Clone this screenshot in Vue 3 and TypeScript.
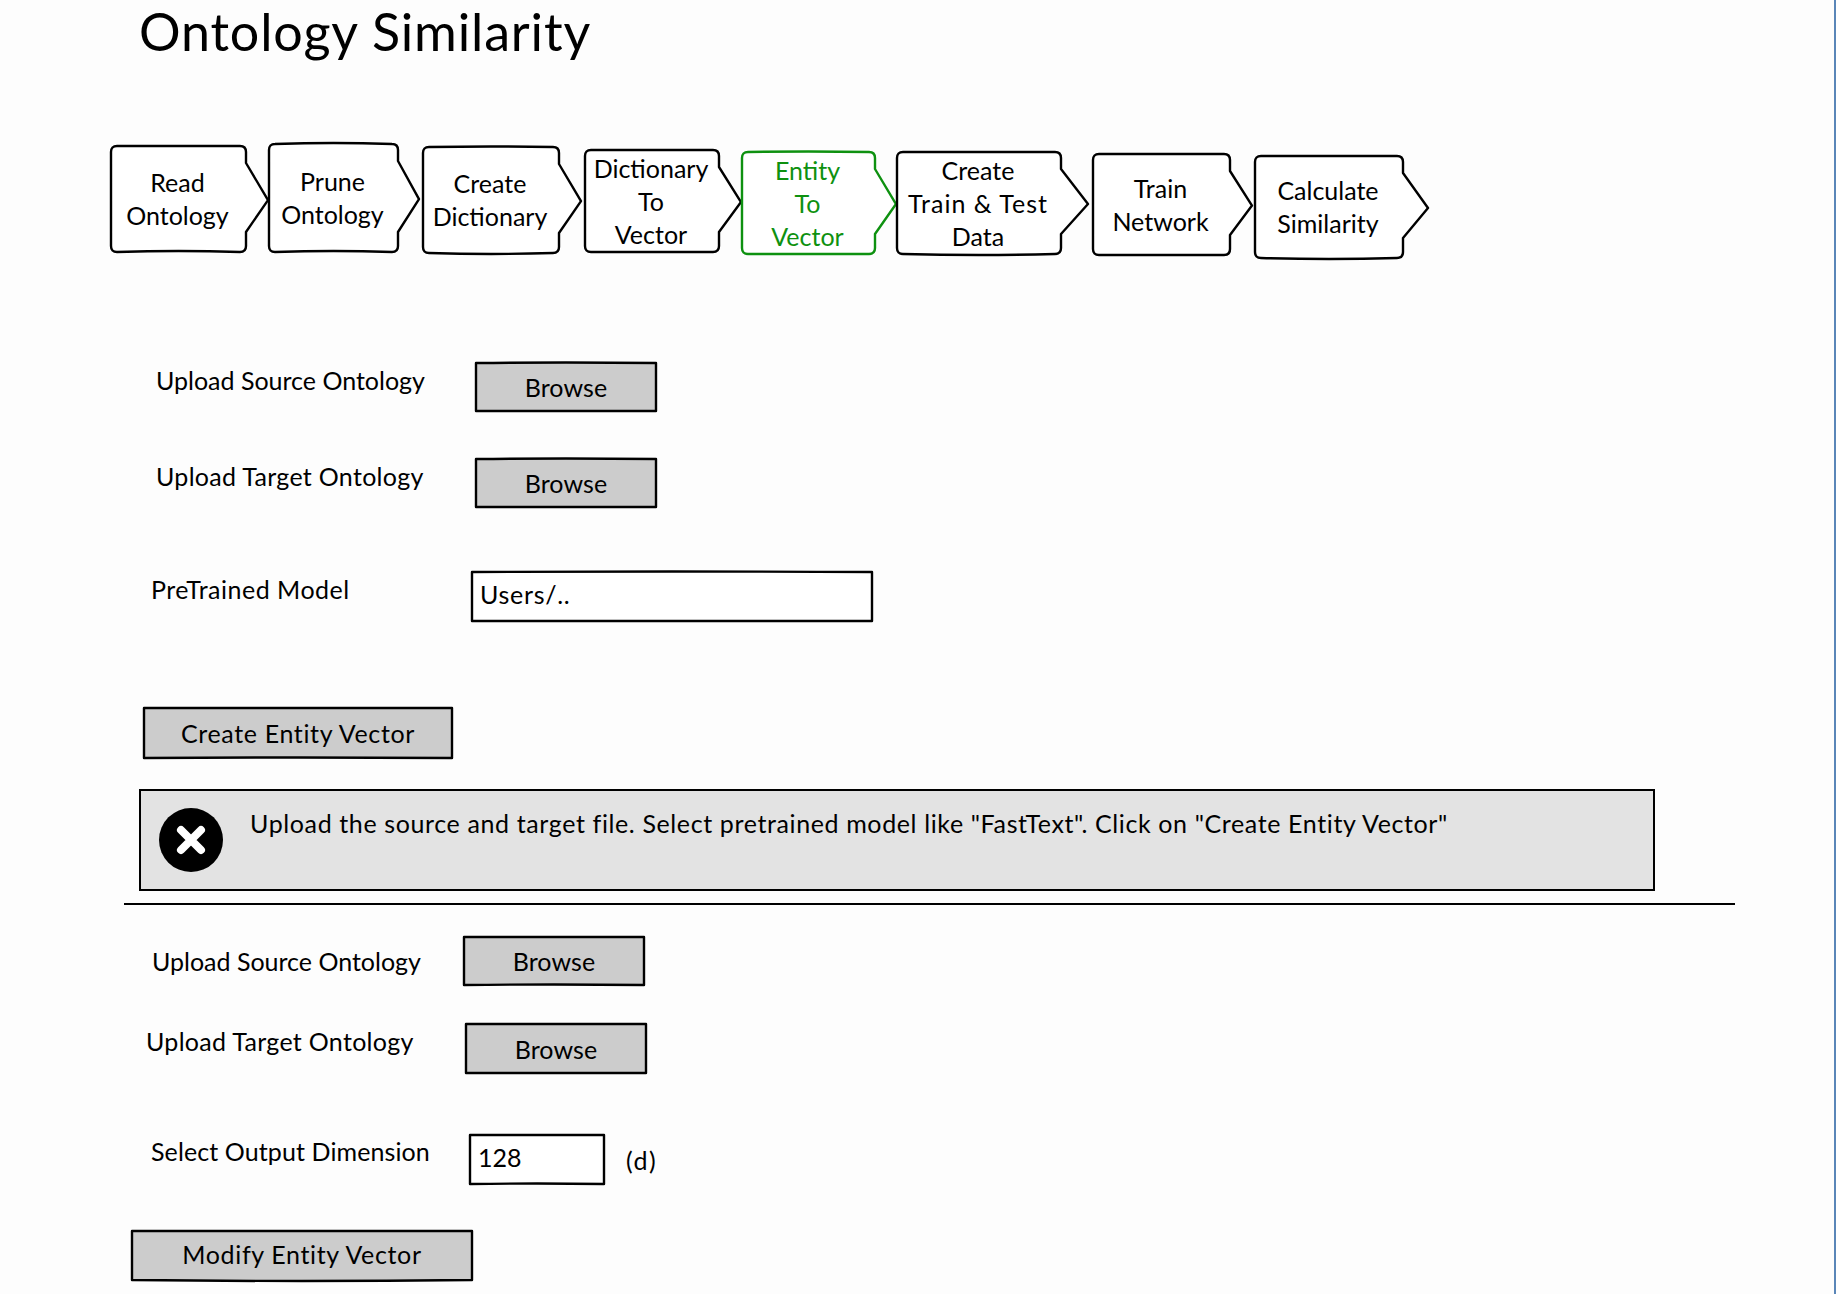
<script setup lang="ts">
import { defineComponent, h } from 'vue'

// sketchy outline used behind steps, buttons and inputs
const SketchBox = defineComponent({
  props: {
    w: { type: Number, required: true },
    h: { type: Number, required: true },
    tip: { type: Number, default: 0 },
    top: { type: Number, default: 0 },
    bottom: { type: Number, default: 0 },
    radius: { type: Number, default: 0 },
    fill: { type: String, default: '#fff' },
    stroke: { type: String, default: '#000' },
  },
  setup(p) {
    return () => {
      const r = p.radius
      const right = p.w - p.tip - 1
      const b = p.h - 1
      const left = 1
      const t = 1
      const midX = (left + right) / 2
      let d = `M${left + r} ${t} Q${midX} ${t - p.top} ${right - r} ${t}`
      if (r) d += ` Q${right} ${t} ${right} ${t + r}`
      if (p.tip) {
        d += ` L${right} ${t + 17} L${p.w - 1} ${p.h * 0.51} L${right} ${b - 20}`
      }
      d += ` L${right} ${b - r}`
      if (r) d += ` Q${right} ${b} ${right - r} ${b}`
      d += ` Q${midX} ${b + p.bottom} ${left + r} ${b}`
      if (r) d += ` Q${left} ${b} ${left} ${b - r}`
      d += ` L${left} ${t + r}`
      if (r) d += ` Q${left} ${t} ${left + r} ${t}`
      d += ' Z'
      return h('svg', { width: p.w, height: p.h + 4, viewBox: `0 0 ${p.w} ${p.h + 4}`, 'aria-hidden': 'true' }, [
        h('path', { d, fill: p.fill, stroke: p.stroke, 'stroke-width': 2.4, 'stroke-linejoin': 'round' }),
      ])
    }
  },
})

interface Step {
  lines: string[]
  gap: number
  y: number
  w: number
  h: number
  tip: number
  top: number
  bottom: number
  active?: boolean
}

const steps: Step[] = [
  { lines: ['Read', 'Ontology'], gap: 0, y: 2, w: 159, h: 108, tip: 22, top: 0, bottom: -2 },
  { lines: ['Prune', 'Ontology'], gap: -1, y: 0, w: 152, h: 110, tip: 21, top: 2, bottom: -2 },
  { lines: ['Create', 'Dictionary'], gap: 2, y: 3, w: 160, h: 108, tip: 22, top: 1, bottom: 2 },
  { lines: ['Dictionary', 'To', 'Vector'], gap: 2, y: 6, w: 158, h: 104, tip: 22, top: 0, bottom: 0 },
  { lines: ['Entity', 'To', 'Vector'], gap: -1, y: 8, w: 156, h: 104, tip: 21, top: 1, bottom: 0, active: true },
  { lines: ['Create', 'Train & Test', 'Data'], gap: -1, y: 8, w: 193, h: 104, tip: 27, top: 0, bottom: 2 },
  { lines: ['Train', 'Network'], gap: 3, y: 10, w: 161, h: 103, tip: 22, top: 0, bottom: 0 },
  { lines: ['Calculate', 'Similarity'], gap: 1, y: 12, w: 175, h: 104, tip: 25, top: 0, bottom: 2 },
]
</script>

<template>
  <div class="page">
    <h1 class="title">Ontology Similarity</h1>

    <div class="steps">
      <div
        v-for="s in steps"
        :key="s.lines.join()"
        class="step"
        :class="{ active: s.active }"
        :style="{ width: s.w + 'px', height: s.h + 'px', marginLeft: s.gap + 'px', marginTop: s.y + 'px', paddingRight: s.tip + 2 + 'px' }"
      >
        <SketchBox
          class="shape"
          :w="s.w"
          :h="s.h"
          :tip="s.tip"
          :top="s.top"
          :bottom="s.bottom"
          :radius="6"
          :stroke="s.active ? '#0e9110' : '#000'"
        />
        <span v-for="l in s.lines" :key="l" class="step-line" :class="{ wide: l === 'Train & Test' }">{{ l }}</span>
      </div>
    </div>

    <div class="row row-source">
      <span class="label label-source">Upload Source Ontology</span>
      <div class="btn btn-browse">
        <SketchBox class="shape" :w="182" :h="50" :top="1" fill="#cccccc" />
        <span>Browse</span>
      </div>
    </div>

    <div class="row row-target">
      <span class="label label-target">Upload Target Ontology</span>
      <div class="btn btn-browse">
        <SketchBox class="shape" :w="182" :h="50" :top="1" fill="#cccccc" />
        <span>Browse</span>
      </div>
    </div>

    <div class="row row-model">
      <span class="label label-model">PreTrained Model</span>
      <div class="input input-model">
        <SketchBox class="shape" :w="402" :h="51" :top="1" />
        <span>Users/..</span>
      </div>
    </div>

    <div class="btn btn-create">
      <SketchBox class="shape" :w="310" :h="52" :bottom="-1" fill="#cccccc" />
      <span>Create Entity Vector</span>
    </div>

    <div class="alert">
      <svg class="alert-icon" width="64" height="64" viewBox="0 0 64 64" aria-hidden="true">
        <circle cx="32" cy="32" r="32" fill="#000" />
        <path d="M22 22 L42 42 M42 22 L22 42" stroke="#fff" stroke-width="8" stroke-linecap="round" />
      </svg>
      <p class="alert-text">Upload the source and target file. Select pretrained model like "FastText". Click on "Create Entity Vector"</p>
    </div>

    <div class="divider"></div>

    <div class="row row-source2">
      <span class="label label-source2">Upload Source Ontology</span>
      <div class="btn btn-browse">
        <SketchBox class="shape" :w="182" :h="50" :bottom="-1" fill="#cccccc" />
        <span>Browse</span>
      </div>
    </div>

    <div class="row row-target2">
      <span class="label label-target2">Upload Target Ontology</span>
      <div class="btn btn-browse">
        <SketchBox class="shape" :w="182" :h="51" fill="#cccccc" />
        <span>Browse</span>
      </div>
    </div>

    <div class="row row-dim">
      <span class="label label-dim">Select Output Dimension</span>
      <div class="input input-dim">
        <SketchBox class="shape" :w="136" :h="51" :bottom="-1" />
        <span>128</span>
      </div>
      <span class="unit">(d)</span>
    </div>

    <div class="btn btn-modify">
      <SketchBox class="shape" :w="342" :h="51" :bottom="2" fill="#cccccc" />
      <span>Modify Entity Vector</span>
    </div>
  </div>
</template>

<style scoped>
.page {
  box-sizing: border-box;
  width: 1836px;
  height: 1294px;
  overflow: hidden;
  background: #fdfdfd;
  border-right: 2px solid #5a86b8;
  font-family: Lato, "Liberation Sans", sans-serif;
  font-size: 25px;
  color: #000;
}

.title {
  margin: 0 0 0 139px;
  height: 64px;
  font-size: 52px;
  line-height: 63px;
  letter-spacing: 0.85px;
  font-weight: 400;
}

.steps {
  display: flex;
  align-items: flex-start;
  margin: 79px 0 0 110px;
  height: 140px;
}

.step {
  position: relative;
  box-sizing: border-box;
  flex: none;
  display: flex;
  flex-direction: column;
  align-items: center;
  justify-content: center;
  line-height: 33px;
}

.step.active {
  color: #0e9110;
}

.step-line {
  position: relative;
  white-space: nowrap;
}

.step-line.wide {
  letter-spacing: 1px;
}

.shape {
  position: absolute;
  left: 0;
  top: 0;
  overflow: visible;
}

.row {
  display: flex;
  align-items: center;
}

.row-source { margin-top: 79px; padding-left: 156px; }
.row-target { margin-top: 46px; padding-left: 156px; }
.row-model { margin-top: 63px; padding-left: 151px; }
.row-source2 { margin-top: 31px; padding-left: 152px; }
.row-target2 { margin-top: 37px; padding-left: 146px; }
.row-dim { margin-top: 60px; padding-left: 151px; }

.label {
  flex: none;
  margin-bottom: 15px;
  white-space: nowrap;
}

.label-source { width: 319px; }
.label-target { width: 319px; letter-spacing: 0.3px; }
.label-model { width: 320px; margin-bottom: 16px; letter-spacing: 0.5px; }
.label-source2 { width: 311px; margin-bottom: 0; }
.label-target2 { width: 319px; letter-spacing: 0.3px; }
.label-dim { width: 318px; margin-bottom: 17px; letter-spacing: 0.1px; }

.btn,
.input {
  position: relative;
  box-sizing: border-box;
  flex: none;
  display: flex;
  align-items: center;
}

.btn {
  justify-content: center;
}

.btn span,
.input span {
  position: relative;
}

.btn-browse { width: 182px; height: 50px; letter-spacing: 0.1px; }

.row-target2 .btn-browse { height: 51px; }

.btn-create {
  width: 310px;
  height: 52px;
  margin: 85px 0 0 143px;
  letter-spacing: 0.65px;
}

.input { padding: 0 0 5px 9px; }
.input-model { width: 402px; height: 51px; letter-spacing: 0.7px; }
.input-dim { width: 136px; height: 51px; padding-bottom: 6px; }

.unit { margin-left: 21px; letter-spacing: 1.5px; }

.alert {
  box-sizing: border-box;
  display: flex;
  align-items: flex-start;
  gap: 27px;
  width: 1516px;
  height: 102px;
  margin: 30px 0 0 139px;
  padding: 17px 0 0 18px;
  background: #e3e3e3;
  border: 2px solid #000;
}

.alert-icon {
  flex: none;
}

.alert-text {
  margin: 0;
  line-height: 30px;
  letter-spacing: 0.62px;
  white-space: nowrap;
}

.divider {
  width: 1611px;
  height: 2px;
  margin: 12px 0 0 124px;
  background: #000;
}

.btn-modify {
  width: 342px;
  height: 51px;
  margin: 45px 0 0 131px;
  padding-bottom: 3px;
  letter-spacing: 0.65px;
}
</style>

<style>
html, body { margin: 0; padding: 0; background: #fdfdfd; }
</style>
